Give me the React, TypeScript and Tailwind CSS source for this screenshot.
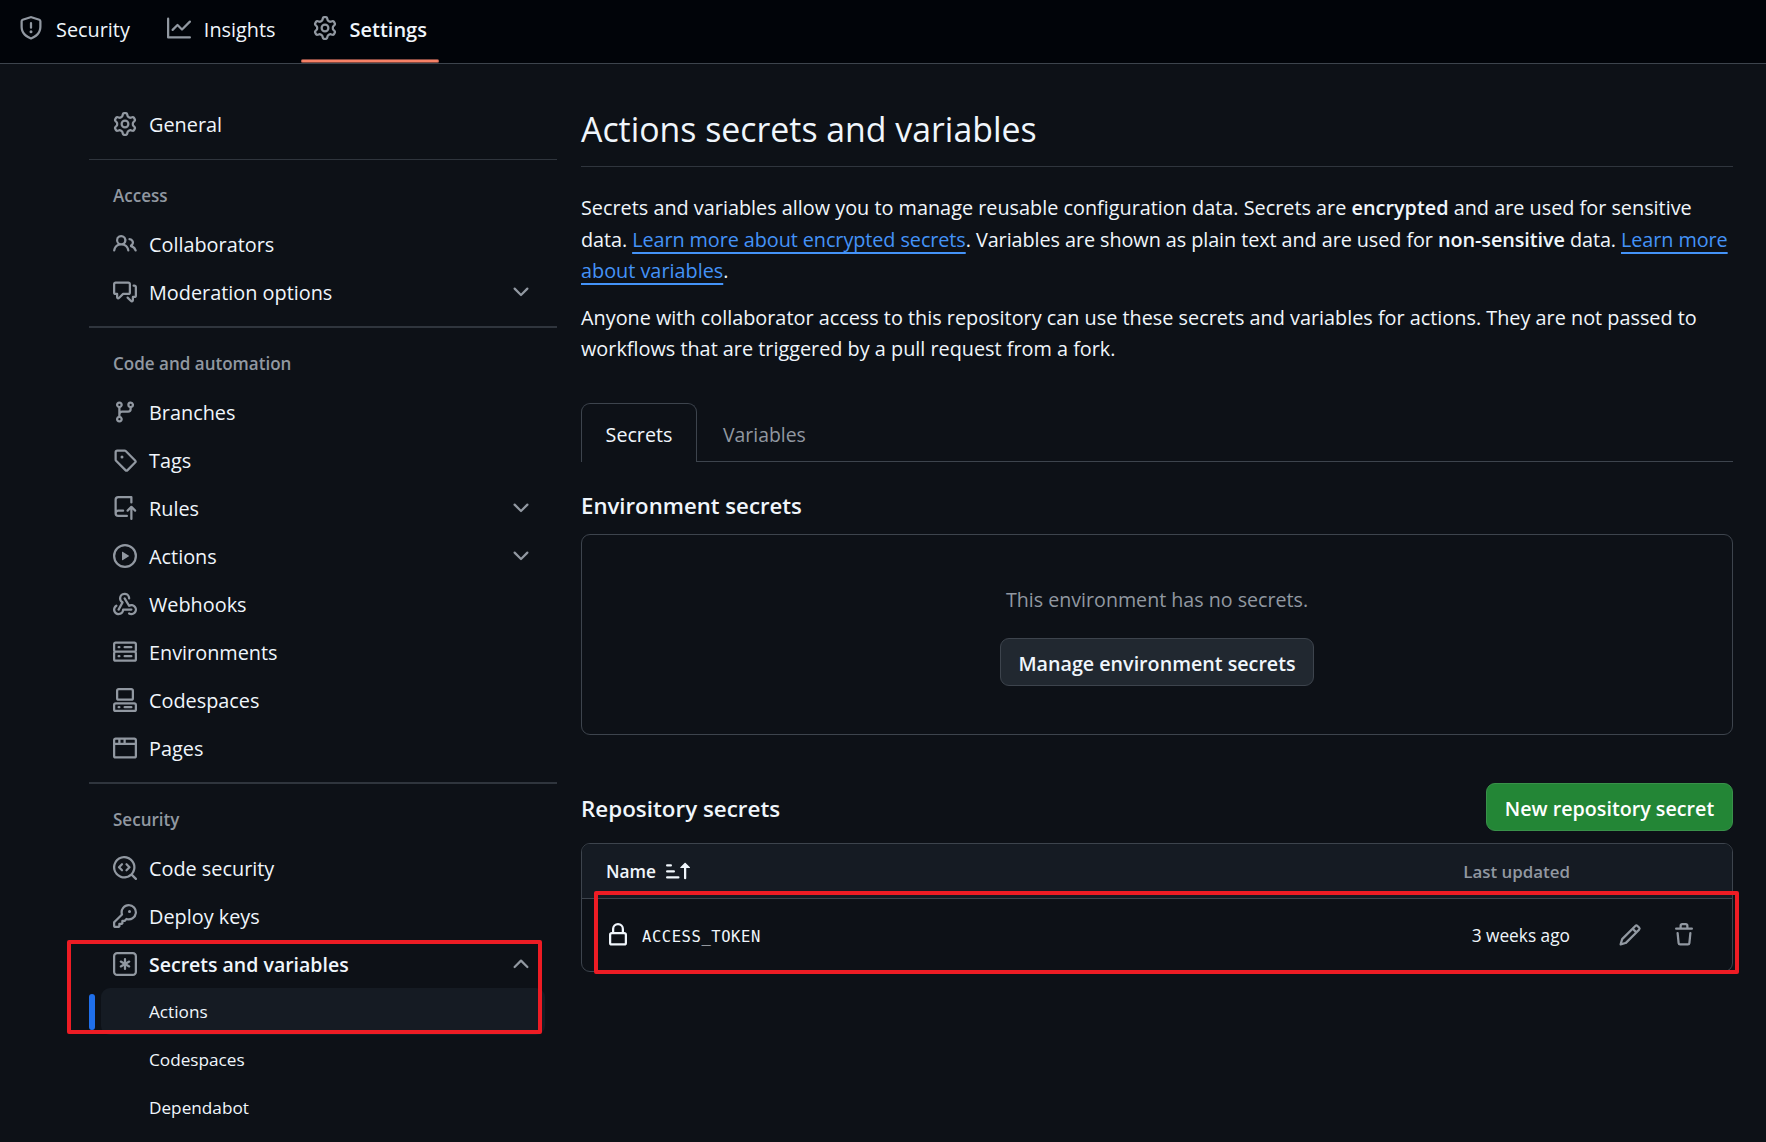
import type { ReactNode } from "react";

const icons = {
  shield: [
    "M7.467.133a1.748 1.748 0 0 1 1.066 0l5.25 1.68A1.75 1.75 0 0 1 15 3.48V7c0 1.566-.32 3.182-1.303 4.682-.983 1.498-2.585 2.813-5.032 3.855a1.697 1.697 0 0 1-1.33 0c-2.447-1.042-4.049-2.357-5.032-3.855C1.32 10.182 1 8.566 1 7V3.48a1.75 1.75 0 0 1 1.217-1.667Zm.61 1.429a.25.25 0 0 0-.153 0l-5.25 1.68a.25.25 0 0 0-.174.238V7c0 1.358.275 2.666 1.057 3.86.784 1.194 2.121 2.34 4.366 3.297a.196.196 0 0 0 .154 0c2.245-.956 3.582-2.104 4.366-3.298C13.225 9.666 13.5 8.36 13.5 7V3.48a.251.251 0 0 0-.174-.237l-5.25-1.68ZM8.75 4.75v3a.75.75 0 0 1-1.5 0v-3a.75.75 0 0 1 1.5 0ZM9 10.5a1 1 0 1 1-2 0 1 1 0 0 1 2 0Z",
  ],
  graph: [
    "M1.5 1.75V13.5h13.75a.75.75 0 0 1 0 1.5H.75a.75.75 0 0 1-.75-.75V1.75a.75.75 0 0 1 1.5 0Zm14.28 2.53-5.25 5.25a.75.75 0 0 1-1.06 0L7 7.06 4.28 9.78a.751.751 0 0 1-1.042-.018.751.751 0 0 1-.018-1.042l3.25-3.25a.75.75 0 0 1 1.06 0L10 7.94l4.72-4.72a.751.751 0 0 1 1.042.018.751.751 0 0 1 .018 1.042Z",
  ],
  gear: [
    "M8 0a8.2 8.2 0 0 1 .701.031C9.444.095 9.99.645 10.16 1.29l.288 1.107c.018.066.079.158.212.224.231.114.454.243.668.386.123.082.233.09.299.071l1.103-.303c.644-.176 1.392.021 1.82.63.27.385.506.792.704 1.218.315.675.111 1.422-.364 1.891l-.814.806c-.049.048-.098.147-.088.294.016.257.016.515 0 .772-.01.147.038.246.088.294l.814.806c.475.469.679 1.216.364 1.891a7.977 7.977 0 0 1-.704 1.217c-.428.61-1.176.807-1.82.63l-1.102-.302c-.067-.019-.177-.011-.3.071a5.909 5.909 0 0 1-.668.386c-.133.066-.194.158-.211.224l-.29 1.106c-.168.646-.715 1.196-1.458 1.26a8.006 8.006 0 0 1-1.402 0c-.743-.064-1.289-.614-1.458-1.26l-.289-1.106c-.018-.066-.079-.158-.212-.224a5.738 5.738 0 0 1-.668-.386c-.123-.082-.233-.09-.299-.071l-1.103.303c-.644.176-1.392-.021-1.82-.63a8.12 8.12 0 0 1-.704-1.218c-.315-.675-.111-1.422.363-1.891l.815-.806c.05-.048.098-.147.088-.294a6.214 6.214 0 0 1 0-.772c.01-.147-.038-.246-.088-.294l-.815-.806C.635 6.045.431 5.298.746 4.623a7.92 7.92 0 0 1 .704-1.217c.428-.61 1.176-.807 1.82-.63l1.102.302c.067.019.177.011.3-.071.214-.143.437-.272.668-.386.133-.066.194-.158.211-.224l.29-1.106C6.009.645 6.556.095 7.299.03 7.53.01 7.764 0 8 0Zm-.571 1.525c-.036.003-.108.036-.137.146l-.289 1.105c-.147.561-.549.967-.998 1.189-.173.086-.34.183-.5.29-.417.278-.97.423-1.529.27l-1.103-.303c-.109-.03-.175.016-.195.045-.22.312-.412.644-.573.99-.014.031-.021.11.059.19l.815.806c.411.406.562.957.53 1.456a4.709 4.709 0 0 0 0 .582c.032.499-.119 1.05-.53 1.456l-.815.806c-.081.08-.073.159-.059.19.162.346.353.677.573.989.02.03.085.076.195.046l1.102-.303c.56-.153 1.113-.008 1.53.27.161.107.328.204.501.29.447.222.85.629.997 1.189l.289 1.105c.029.109.101.143.137.146a6.6 6.6 0 0 0 1.142 0c.036-.003.108-.036.137-.146l.289-1.105c.147-.561.549-.967.998-1.189.173-.086.34-.183.5-.29.417-.278.97-.423 1.529-.27l1.103.303c.109.029.175-.016.195-.045.22-.313.411-.644.573-.99.014-.031.021-.11-.059-.19l-.815-.806c-.411-.406-.562-.957-.53-1.456a4.709 4.709 0 0 0 0-.582c-.032-.499.119-1.05.53-1.456l.815-.806c.081-.08.073-.159.059-.19a6.464 6.464 0 0 0-.573-.989c-.02-.03-.085-.076-.195-.046l-1.102.303c-.56.153-1.113.008-1.53-.27a4.44 4.44 0 0 0-.501-.29c-.447-.222-.85-.629-.997-1.189l-.289-1.105c-.029-.11-.101-.143-.137-.146a6.6 6.6 0 0 0-1.142 0ZM11 8a3 3 0 1 1-6 0 3 3 0 0 1 6 0ZM9.5 8a1.5 1.5 0 1 0-3.001.001A1.5 1.5 0 0 0 9.5 8Z",
  ],
  people: [
    "M2 5.5a3.5 3.5 0 1 1 5.898 2.549 5.508 5.508 0 0 1 3.034 4.084.75.75 0 1 1-1.482.235 4 4 0 0 0-7.9 0 .75.75 0 0 1-1.482-.236A5.507 5.507 0 0 1 3.102 8.05 3.493 3.493 0 0 1 2 5.5ZM11 4a3.001 3.001 0 0 1 2.22 5.018 5.01 5.01 0 0 1 2.56 3.012.749.749 0 0 1-.885.954.752.752 0 0 1-.549-.514 3.507 3.507 0 0 0-2.522-2.372.75.75 0 0 1-.574-.73v-.352a.75.75 0 0 1 .416-.672A1.5 1.5 0 0 0 11 5.5.75.75 0 0 1 11 4Zm-5.5-.5a2 2 0 1 0-.001 3.999A2 2 0 0 0 5.5 3.5Z",
  ],
  discussion: [
    "M1.75 1h8.5c.966 0 1.75.784 1.75 1.75v5.5A1.75 1.75 0 0 1 10.25 10H7.061l-2.574 2.573A1.458 1.458 0 0 1 2 11.543V10h-.25A1.75 1.75 0 0 1 0 8.25v-5.5C0 1.784.784 1 1.75 1ZM1.5 2.75v5.5c0 .138.112.25.25.25h1a.75.75 0 0 1 .75.75v2.19l2.72-2.72a.749.749 0 0 1 .53-.22h3.5a.25.25 0 0 0 .25-.25v-5.5a.25.25 0 0 0-.25-.25h-8.5a.25.25 0 0 0-.25.25Zm13 2a.25.25 0 0 0-.25-.25h-.5a.75.75 0 0 1 0-1.5h.5c.966 0 1.75.784 1.75 1.75v5.5A1.75 1.75 0 0 1 14.25 12H14v1.543a1.458 1.458 0 0 1-2.487 1.03L9.22 12.28a.749.749 0 0 1 .326-1.275.749.749 0 0 1 .734.215l2.22 2.22v-2.19a.75.75 0 0 1 .75-.75h1a.25.25 0 0 0 .25-.25Z",
  ],
  branch: [
    "M9.5 3.25a2.25 2.25 0 1 1 3 2.122V6A2.5 2.5 0 0 1 10 8.5H6a1 1 0 0 0-1 1v1.128a2.251 2.251 0 1 1-1.5 0V5.372a2.25 2.25 0 1 1 1.5 0v1.836A2.493 2.493 0 0 1 6 7h4a1 1 0 0 0 1-1v-.628A2.25 2.25 0 0 1 9.5 3.25Zm-6 0a.75.75 0 1 0 1.5 0 .75.75 0 0 0-1.5 0Zm8.25-.75a.75.75 0 1 0 0 1.5.75.75 0 0 0 0-1.5ZM4.25 12a.75.75 0 1 0 0 1.5.75.75 0 0 0 0-1.5Z",
  ],
  tag: [
    "M1 7.775V2.75C1 1.784 1.784 1 2.75 1h5.025c.464 0 .91.184 1.238.513l6.25 6.25a1.75 1.75 0 0 1 0 2.474l-5.026 5.026a1.75 1.75 0 0 1-2.474 0l-6.25-6.25A1.752 1.752 0 0 1 1 7.775Zm1.5 0c0 .066.026.13.073.177l6.25 6.25a.25.25 0 0 0 .354 0l5.025-5.025a.25.25 0 0 0 0-.354l-6.25-6.25a.25.25 0 0 0-.177-.073H2.75a.25.25 0 0 0-.25.25ZM6 5a1 1 0 1 1 0 2 1 1 0 0 1 0-2Z",
  ],
  repoPush: [
    "M1 2.5A2.5 2.5 0 0 1 3.5 0h8.75a.75.75 0 0 1 .75.75v3.5a.75.75 0 0 1-1.5 0V1.5h-8a1 1 0 0 0-1 1v6.708A2.493 2.493 0 0 1 3.5 9h3.25a.75.75 0 0 1 0 1.5H3.5a1 1 0 0 0 0 2h5.75a.75.75 0 0 1 0 1.5H3.5A2.5 2.5 0 0 1 1 11.5Zm13.23 7.79h-.001l-1.224-1.224v6.184a.75.75 0 0 1-1.5 0V9.066L10.28 10.29a.75.75 0 0 1-1.06-1.061l2.505-2.504a.75.75 0 0 1 1.06 0L15.29 9.23a.751.751 0 0 1-.018 1.042.751.751 0 0 1-1.042.018Z",
  ],
  play: [
    "M8 0a8 8 0 1 1 0 16A8 8 0 0 1 8 0ZM1.5 8a6.5 6.5 0 1 0 13 0 6.5 6.5 0 0 0-13 0Zm4.879-2.773 4.264 2.559a.25.25 0 0 1 0 .428l-4.264 2.559A.25.25 0 0 1 6 10.559V5.442a.25.25 0 0 1 .379-.215Z",
  ],
  webhook: [
    "M5.5 4.25a2.25 2.25 0 0 1 4.5 0 .75.75 0 0 0 1.5 0 3.75 3.75 0 1 0-6.14 2.889l-2.272 4.258a.75.75 0 0 0 1.324.706L7 7.25a.75.75 0 0 0-.309-1.015A2.25 2.25 0 0 1 5.5 4.25Z",
    "M7.364 3.607a.75.75 0 0 1 1.03.257l2.608 4.349a3.75 3.75 0 1 1-.628 6.785.75.75 0 0 1 .752-1.299 2.25 2.25 0 1 0-.033-3.88.75.75 0 0 1-1.03-.256L7.107 4.636a.75.75 0 0 1 .257-1.03Z",
    "M2.9 8.776A.75.75 0 0 1 2.625 9.8 2.25 2.25 0 1 0 6 11.75a.75.75 0 0 1 .75-.751h5.5a.75.75 0 0 1 0 1.5H7.425a3.751 3.751 0 1 1-5.55-3.998.75.75 0 0 1 1.024.274Z",
  ],
  server: [
    "M1.75 1h12.5c.966 0 1.75.784 1.75 1.75v4c0 .372-.116.717-.314 1 .198.283.314.628.314 1v4a1.75 1.75 0 0 1-1.75 1.75H1.75A1.75 1.75 0 0 1 0 12.75v-4c0-.358.109-.707.314-1a1.739 1.739 0 0 1-.314-1v-4C0 1.784.784 1 1.75 1ZM1.5 2.75v4c0 .138.112.25.25.25h12.5a.25.25 0 0 0 .25-.25v-4a.25.25 0 0 0-.25-.25H1.75a.25.25 0 0 0-.25.25Zm.25 5.75a.25.25 0 0 0-.25.25v4c0 .138.112.25.25.25h12.5a.25.25 0 0 0 .25-.25v-4a.25.25 0 0 0-.25-.25ZM7 4.75A.75.75 0 0 1 7.75 4h4.5a.75.75 0 0 1 0 1.5h-4.5A.75.75 0 0 1 7 4.75ZM7.75 10h4.5a.75.75 0 0 1 0 1.5h-4.5a.75.75 0 0 1 0-1.5ZM3 4.75A.75.75 0 0 1 3.75 4h.5a.75.75 0 0 1 0 1.5h-.5A.75.75 0 0 1 3 4.75ZM3.75 10h.5a.75.75 0 0 1 0 1.5h-.5a.75.75 0 0 1 0-1.5Z",
  ],
  codespaces: [
    "M0 11.25c0-.966.784-1.75 1.75-1.75h12.5c.966 0 1.75.784 1.75 1.75v3A1.75 1.75 0 0 1 14.25 16H1.75A1.75 1.75 0 0 1 0 14.25Zm2-9.5C2 .784 2.784 0 3.75 0h8.5C13.216 0 14 .784 14 1.75v5a1.75 1.75 0 0 1-1.75 1.75h-8.5A1.75 1.75 0 0 1 2 6.75Zm1.75-.25a.25.25 0 0 0-.25.25v5c0 .138.112.25.25.25h8.5a.25.25 0 0 0 .25-.25v-5a.25.25 0 0 0-.25-.25Zm-2 9.5a.25.25 0 0 0-.25.25v3c0 .138.112.25.25.25h12.5a.25.25 0 0 0 .25-.25v-3a.25.25 0 0 0-.25-.25Z",
    "M7 12.75a.75.75 0 0 1 .75-.75h4.5a.75.75 0 0 1 0 1.5h-4.5a.75.75 0 0 1-.75-.75Zm-4 0a.75.75 0 0 1 .75-.75h.5a.75.75 0 0 1 0 1.5h-.5a.75.75 0 0 1-.75-.75Z",
  ],
  browser: [
    "M0 2.75C0 1.784.784 1 1.75 1h12.5c.966 0 1.75.784 1.75 1.75v10.5A1.75 1.75 0 0 1 14.25 15H1.75A1.75 1.75 0 0 1 0 13.25ZM14.5 6h-13v7.25c0 .138.112.25.25.25h12.5a.25.25 0 0 0 .25-.25Zm-6-3.5v2h6V2.75a.25.25 0 0 0-.25-.25ZM5 2.5v2h2v-2Zm-3.25 0a.25.25 0 0 0-.25.25V4.5h2v-2Z",
  ],
  codescan: [
    "M8.47 4.97a.75.75 0 0 0 0 1.06L9.94 7.5 8.47 8.97a.75.75 0 1 0 1.06 1.06l2-2a.75.75 0 0 0 0-1.06l-2-2a.75.75 0 0 0-1.06 0ZM6.53 6.03a.75.75 0 0 0-1.06-1.06l-2 2a.75.75 0 0 0 0 1.06l2 2a.75.75 0 1 0 1.06-1.06L5.06 7.5l1.47-1.47Z",
    "M12.246 13.307a7.501 7.501 0 1 1 1.06-1.06l2.474 2.473a.749.749 0 0 1-.326 1.275.749.749 0 0 1-.734-.215ZM1.5 7.5a6.002 6.002 0 0 0 3.608 5.504 6.002 6.002 0 0 0 6.486-1.117.748.748 0 0 1 .292-.293A6 6 0 1 0 1.5 7.5Z",
  ],
  key: [
    "M10.5 0a5.499 5.499 0 1 1-1.288 10.848l-.932.932a.749.749 0 0 1-.53.22H7v.75a.749.749 0 0 1-.22.53l-.5.5a.749.749 0 0 1-.53.22H5v.75a.749.749 0 0 1-.22.53l-.5.5a.749.749 0 0 1-.53.22h-2A1.75 1.75 0 0 1 0 14.25v-2c0-.199.079-.389.22-.53l4.932-4.932A5.5 5.5 0 0 1 10.5 0Zm-4 5.5c-.001.431.069.86.205 1.269a.75.75 0 0 1-.181.768L1.5 12.56v1.69c0 .138.112.25.25.25h1.69l.06-.06v-1.19a.75.75 0 0 1 .75-.75h1.19l.06-.06v-1.19a.75.75 0 0 1 .75-.75h1.19l1.023-1.025a.75.75 0 0 1 .768-.18A4 4 0 1 0 6.5 5.5ZM11 6a1 1 0 1 1 0-2 1 1 0 0 1 0 2Z",
  ],
  asterisk: [
    "M0 2.75A2.75 2.75 0 0 1 2.75 0h10.5A2.75 2.75 0 0 1 16 2.75v10.5A2.75 2.75 0 0 1 13.25 16H2.75A2.75 2.75 0 0 1 0 13.25ZM2.75 1.5c-.69 0-1.25.56-1.25 1.25v10.5c0 .69.56 1.25 1.25 1.25h10.5c.69 0 1.25-.56 1.25-1.25V2.75c0-.69-.56-1.25-1.25-1.25Z",
    "M8 4a.75.75 0 0 1 .75.75V6.7l1.69-.975a.75.75 0 0 1 .75 1.3L9.5 8l1.69.976a.75.75 0 0 1-.75 1.298L8.75 9.3v1.951a.75.75 0 0 1-1.5 0V9.299l-1.69.976a.75.75 0 0 1-.75-1.3L6.5 8l-1.69-.975a.75.75 0 0 1 .75-1.3l1.69.976V4.75A.75.75 0 0 1 8 4Z",
  ],
  chevronDown: [
    "M12.78 5.22a.749.749 0 0 1 0 1.06l-4.25 4.25a.749.749 0 0 1-1.06 0L3.22 6.28a.749.749 0 1 1 1.06-1.06L8 8.939l3.72-3.719a.749.749 0 0 1 1.06 0Z",
  ],
  chevronUp: [
    "M3.22 10.53a.749.749 0 0 1 0-1.06l4.25-4.25a.749.749 0 0 1 1.06 0l4.25 4.25a.749.749 0 1 1-1.06 1.06L8 6.811 4.28 10.53a.749.749 0 0 1-1.06 0Z",
  ],
  lock: [
    "M4 4a4 4 0 0 1 8 0v2h.25c.966 0 1.75.784 1.75 1.75v5.5A1.75 1.75 0 0 1 12.25 15h-8.5A1.75 1.75 0 0 1 2 13.25v-5.5C2 6.784 2.784 6 3.75 6H4Zm8.25 3.5h-8.5a.25.25 0 0 0-.25.25v5.5c0 .138.112.25.25.25h8.5a.25.25 0 0 0 .25-.25v-5.5a.25.25 0 0 0-.25-.25ZM10.5 6V4a2.5 2.5 0 1 0-5 0v2Z",
  ],
  pencil: [
    "M11.013 1.427a1.75 1.75 0 0 1 2.474 0l1.086 1.086a1.75 1.75 0 0 1 0 2.474l-8.61 8.61c-.21.21-.47.364-.756.445l-3.251.93a.75.75 0 0 1-.927-.928l.929-3.25c.081-.286.235-.547.445-.758l8.61-8.61Zm.176 4.823L9.75 4.81l-6.286 6.287a.253.253 0 0 0-.064.108l-.558 1.953 1.953-.558a.253.253 0 0 0 .108-.064Zm1.238-3.763a.25.25 0 0 0-.354 0L10.811 3.75l1.439 1.44 1.263-1.263a.25.25 0 0 0 0-.354Z",
  ],
  trash: [
    "M11 1.75V3h2.25a.75.75 0 0 1 0 1.5H2.75a.75.75 0 0 1 0-1.5H5V1.75C5 .784 5.784 0 6.75 0h2.5C10.216 0 11 .784 11 1.75ZM4.496 6.675l.66 6.6a.25.25 0 0 0 .249.225h5.19a.25.25 0 0 0 .249-.225l.66-6.6a.75.75 0 0 1 1.492.149l-.66 6.6A1.748 1.748 0 0 1 10.595 15h-5.19a1.75 1.75 0 0 1-1.741-1.575l-.66-6.6a.75.75 0 1 1 1.492-.15ZM6.5 1.75V3h3V1.75a.25.25 0 0 0-.25-.25h-2.5a.25.25 0 0 0-.25.25Z",
  ],
  sortAsc: [
    "m12.927 2.573 3 3A.25.25 0 0 1 15.75 6H13.5v6.75a.75.75 0 0 1-1.5 0V6H9.75a.25.25 0 0 1-.177-.427l3-3a.25.25 0 0 1 .354 0ZM0 12.25a.75.75 0 0 1 .75-.75h7.5a.75.75 0 0 1 0 1.5H.75a.75.75 0 0 1-.75-.75Zm0-4a.75.75 0 0 1 .75-.75h4.5a.75.75 0 0 1 0 1.5h-4.5A.75.75 0 0 1 0 8.25Zm0-4a.75.75 0 0 1 .75-.75h2.5a.75.75 0 0 1 0 1.5H.75A.75.75 0 0 1 0 4.25Z",
  ],
};

type IconName = keyof typeof icons;

function Icon({ name, className = "text-[#9198a1]" }: { name: IconName; className?: string }) {
  return (
    <svg viewBox="0 0 16 16" fill="currentColor" className={`size-6 shrink-0 ${className}`} aria-hidden="true">
      {icons[name].map((d) => (
        <path key={d} d={d} />
      ))}
    </svg>
  );
}

function NavTab({ icon, label, selected }: { icon: IconName; label: string; selected?: boolean }) {
  return (
    <a className={`relative flex h-[58px] items-center gap-[13px] px-3 ${selected ? "text-[20px] font-semibold" : ""}`}>
      <Icon name={icon} className="mb-0.5 text-[#9198a1]" />
      <span className="pt-0.5 leading-6">{label}</span>
      {selected && (
        <span className="absolute inset-x-0 top-[59px] h-1 rounded-xs border-y border-[#86493f] bg-[#f78166]" />
      )}
    </a>
  );
}

function SideItem({
  icon,
  label,
  chevron,
  bold,
}: {
  icon: IconName;
  label: string;
  chevron?: "chevronDown" | "chevronUp";
  bold?: boolean;
}) {
  return (
    <a className="flex h-12 items-center pr-6 pl-6">
      <Icon name={icon} />
      <span className={`ml-3 flex-1 pt-0.5 ${bold ? "text-[19.5px] font-semibold" : ""}`}>{label}</span>
      {chevron && <Icon name={chevron} />}
    </a>
  );
}

function SideHeading({ children }: { children: ReactNode }) {
  return (
    <h2 className="h-[60px] pt-[23px] pl-6 text-[17.05px] leading-[26px] font-semibold text-[#9198a1]">{children}</h2>
  );
}

function SideDivider() {
  return <div className="mt-2.5 h-0.5 bg-[#2f353d]" />;
}

function Link({ children }: { children: ReactNode }) {
  return (
    <a className="text-[#4493f8] underline decoration-2 underline-offset-[5px] [text-decoration-skip-ink:none]">
      {children}
    </a>
  );
}

function Sidebar() {
  return (
    <aside className="w-[468px] shrink-0 pt-9">
      <SideItem icon="gear" label="General" />
      <div className="mt-[11px] h-px bg-[#2f353d]" />
      <SideHeading>Access</SideHeading>
      <SideItem icon="people" label="Collaborators" />
      <SideItem icon="discussion" label="Moderation options" chevron="chevronDown" />
      <SideDivider />
      <SideHeading>Code and automation</SideHeading>
      <SideItem icon="branch" label="Branches" />
      <SideItem icon="tag" label="Tags" />
      <SideItem icon="repoPush" label="Rules" chevron="chevronDown" />
      <SideItem icon="play" label="Actions" chevron="chevronDown" />
      <SideItem icon="webhook" label="Webhooks" />
      <SideItem icon="server" label="Environments" />
      <SideItem icon="codespaces" label="Codespaces" />
      <SideItem icon="browser" label="Pages" />
      <SideDivider />
      <SideHeading>Security</SideHeading>
      <SideItem icon="codescan" label="Code security" />
      <SideItem icon="key" label="Deploy keys" />
      <div className="relative">
        <SideItem icon="asterisk" label="Secrets and variables" chevron="chevronUp" bold />
        <div className="flex items-center gap-1.5 text-[17.2px]">
          <span className="h-9 w-1.5 rounded-full bg-[#1f6feb]" />
          <a className="flex h-[47px] w-[444px] items-center rounded-[9px] bg-[#151b23] pl-12">Actions</a>
        </div>
        <a className="flex h-12 items-center pt-0.5 pl-[60px] text-[17.2px]">Codespaces</a>
        <a className="flex h-12 items-center pt-0.5 pl-[60px] text-[17.2px]">Dependabot</a>
        <div className="absolute top-0 -left-[22px] h-[94px] w-[475px] rounded-xs border-4 border-[#ed1c24]" />
      </div>
    </aside>
  );
}

function SecretsTable() {
  return (
    <div className="relative mt-3">
      <div className="overflow-hidden rounded-[9px] border border-[#3d444d]">
        <div className="flex h-[55px] items-center border-b border-[#3d444d] bg-[#151b23] pr-[162px] pl-6 text-[16.9px] font-semibold">
          <span className="pt-px text-[17.3px]">Name</span>
          <Icon name="sortAsc" className="ml-2.5 text-[#f0f6fc]" />
          <span className="ml-auto pt-0.5 text-[#9198a1]">Last updated</span>
        </div>
        <div className="flex h-[72px] items-center pr-9 pl-6">
          <Icon name="lock" className="text-[#f0f6fc]" />
          <code className="mt-[5px] ml-3 font-['DejaVu_Sans_Mono',monospace] text-[15.5px] tracking-[0.57px]">
            ACCESS_TOKEN
          </code>
          <span className="ml-auto pt-px text-[17.3px]">3 weeks ago</span>
          <Icon name="pencil" className="ml-12 text-[#9198a1]" />
          <Icon name="trash" className="ml-[30px] text-[#9198a1]" />
        </div>
      </div>
      <div className="absolute top-12 left-[13px] h-[83px] w-[1145px] rounded-xs border-4 border-[#ed1c24]" />
    </div>
  );
}

function Main() {
  return (
    <main className="w-[1152px] shrink-0 pt-[38px]">
      <h1 className="border-b border-[#2f353d] pb-2.5 text-[33.85px] leading-[54px]">Actions secrets and variables</h1>
      <p className="mt-[25px] text-[19.83px] leading-[31.5px] whitespace-nowrap">
        Secrets and variables allow you to manage reusable configuration data. Secrets are{" "}
        <strong className="font-semibold">encrypted</strong> and are used for sensitive
        <br />
        <span className="tracking-[-0.08px]">
          data. <Link>Learn more about encrypted secrets</Link>. Variables are shown as plain text and are used for{" "}
          <strong className="font-semibold">non-sensitive</strong> data. <Link>Learn more</Link>
        </span>
        <br />
        <Link>about variables</Link>.
      </p>
      <p className="mt-[15.5px] text-[19.83px] leading-[31px] whitespace-nowrap">
        Anyone with collaborator access to this repository can use these secrets and variables for actions. They are
        not passed to
        <br />
        workflows that are triggered by a pull request from a fork.
      </p>
      <div className="mt-[39px] flex h-[59px]">
        <a className="flex w-[116px] items-center justify-center rounded-t-[9px] border border-b-0 border-[#3d444d] pt-1 text-[19.7px]">
          Secrets
        </a>
        <a className="flex flex-1 items-center border-b border-[#3d444d] pt-[5px] pl-[26px] text-[19.4px] text-[#9198a1]">
          Variables
        </a>
      </div>
      <h3 className="mt-[26px] text-[22.2px] leading-9 font-semibold">Environment secrets</h3>
      <div className="mt-2.5 flex h-[201px] flex-col items-center rounded-[9px] border border-[#3d444d] pt-[49px]">
        <p className="text-[19.65px] leading-8 text-[#9198a1]">This environment has no secrets.</p>
        <button className="mt-[22px] h-12 w-[314px] rounded-[9px] border border-[#3d444d] bg-[#212830] pt-1 text-[19.7px] font-semibold">
          Manage environment secrets
        </button>
      </div>
      <div className="mt-12 flex items-center justify-between">
        <h3 className="pt-1 text-[22.4px] font-semibold">Repository secrets</h3>
        <button className="h-12 w-[247px] rounded-[9px] border border-[#39914a] bg-[#238636] pt-1 text-[19.7px] font-semibold text-white">
          New repository secret
        </button>
      </div>
      <SecretsTable />
    </main>
  );
}

export default function App() {
  return (
    <div className="h-[1142px] w-[1766px] overflow-hidden bg-[#0d1117] font-['Open_Sans','Noto_Sans',sans-serif] text-[19.85px] text-[#f0f6fc]">
      <header className="flex h-16 gap-[13px] border-b border-[#3d444d] bg-[#010409] pl-[7px]">
        <NavTab icon="shield" label="Security" />
        <NavTab icon="graph" label="Insights" />
        <NavTab icon="gear" label="Settings" selected />
      </header>
      <div className="flex gap-6 pl-[89px]">
        <Sidebar />
        <Main />
      </div>
    </div>
  );
}
